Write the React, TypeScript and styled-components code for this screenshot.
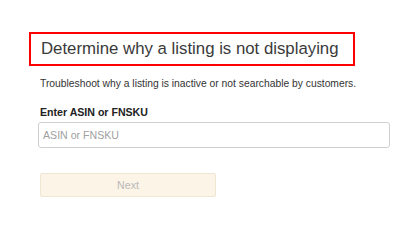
import * as React from 'react';
import styled, { createGlobalStyle } from 'styled-components';

const GlobalStyle = createGlobalStyle`
  html, body {
    margin: 0;
    padding: 0;
    background: #ffffff;
  }
  body {
    font-family: "Liberation Sans", Arial, sans-serif;
    color: #333333;
  }
`;

const Page = styled.div`
  width: 420px;
  height: 232px;
  box-sizing: border-box;
  padding: 32px 0 0 29px;
  display: flex;
  flex-direction: column;
  align-items: flex-start;
`;

const TitleBox = styled.div`
  border: 2px solid #ff0000;
  padding: 0 14px 0 10px;
  width: 326px;
  box-sizing: border-box;
`;

const Title = styled.h1`
  margin: 0;
  font-size: 16.8px;
  font-weight: normal;
  line-height: 30px;
  color: #3a3a3a;
  white-space: nowrap;
`;

const Body = styled.div`
  padding-left: 10px;
  display: flex;
  flex-direction: column;
  align-items: flex-start;
`;

const Subtitle = styled.p`
  margin: 10px 0 0 1px;
  font-size: 10.3px;
  line-height: 16px;
  color: #333333;
  white-space: nowrap;
`;

const Label = styled.label`
  margin: 12px 0 0 1px;
  font-size: 10.6px;
  font-weight: bold;
  line-height: 16px;
  color: #222222;
`;

const Input = styled.input`
  margin: 2px 0 0 -1px;
  width: 352px;
  height: 26px;
  box-sizing: border-box;
  border: 1px solid #cfcfcf;
  border-radius: 3px;
  padding: 0 4px;
  font-family: inherit;
  font-size: 10.6px;
  color: #333;
  outline: none;

  &::placeholder {
    color: #a0a0a0;
  }
`;

const NextButton = styled.button`
  margin: 25px 0 0 1px;
  width: 176px;
  height: 24px;
  box-sizing: border-box;
  background: #fbf4e7;
  border: 1px solid #efe6d4;
  border-radius: 2px;
  font-family: inherit;
  font-size: 10.6px;
  color: #b8b8b8;
  cursor: default;
`;

export default function App() {
  return (
    <Page>
      <GlobalStyle />
      <TitleBox>
        <Title>Determine why a listing is not displaying</Title>
      </TitleBox>
      <Body>
        <Subtitle>Troubleshoot why a listing is inactive or not searchable by customers.</Subtitle>
        <Label htmlFor="asin">Enter ASIN or FNSKU</Label>
        <Input id="asin" placeholder="ASIN or FNSKU" />
        <NextButton disabled>Next</NextButton>
      </Body>
    </Page>
  );
}
